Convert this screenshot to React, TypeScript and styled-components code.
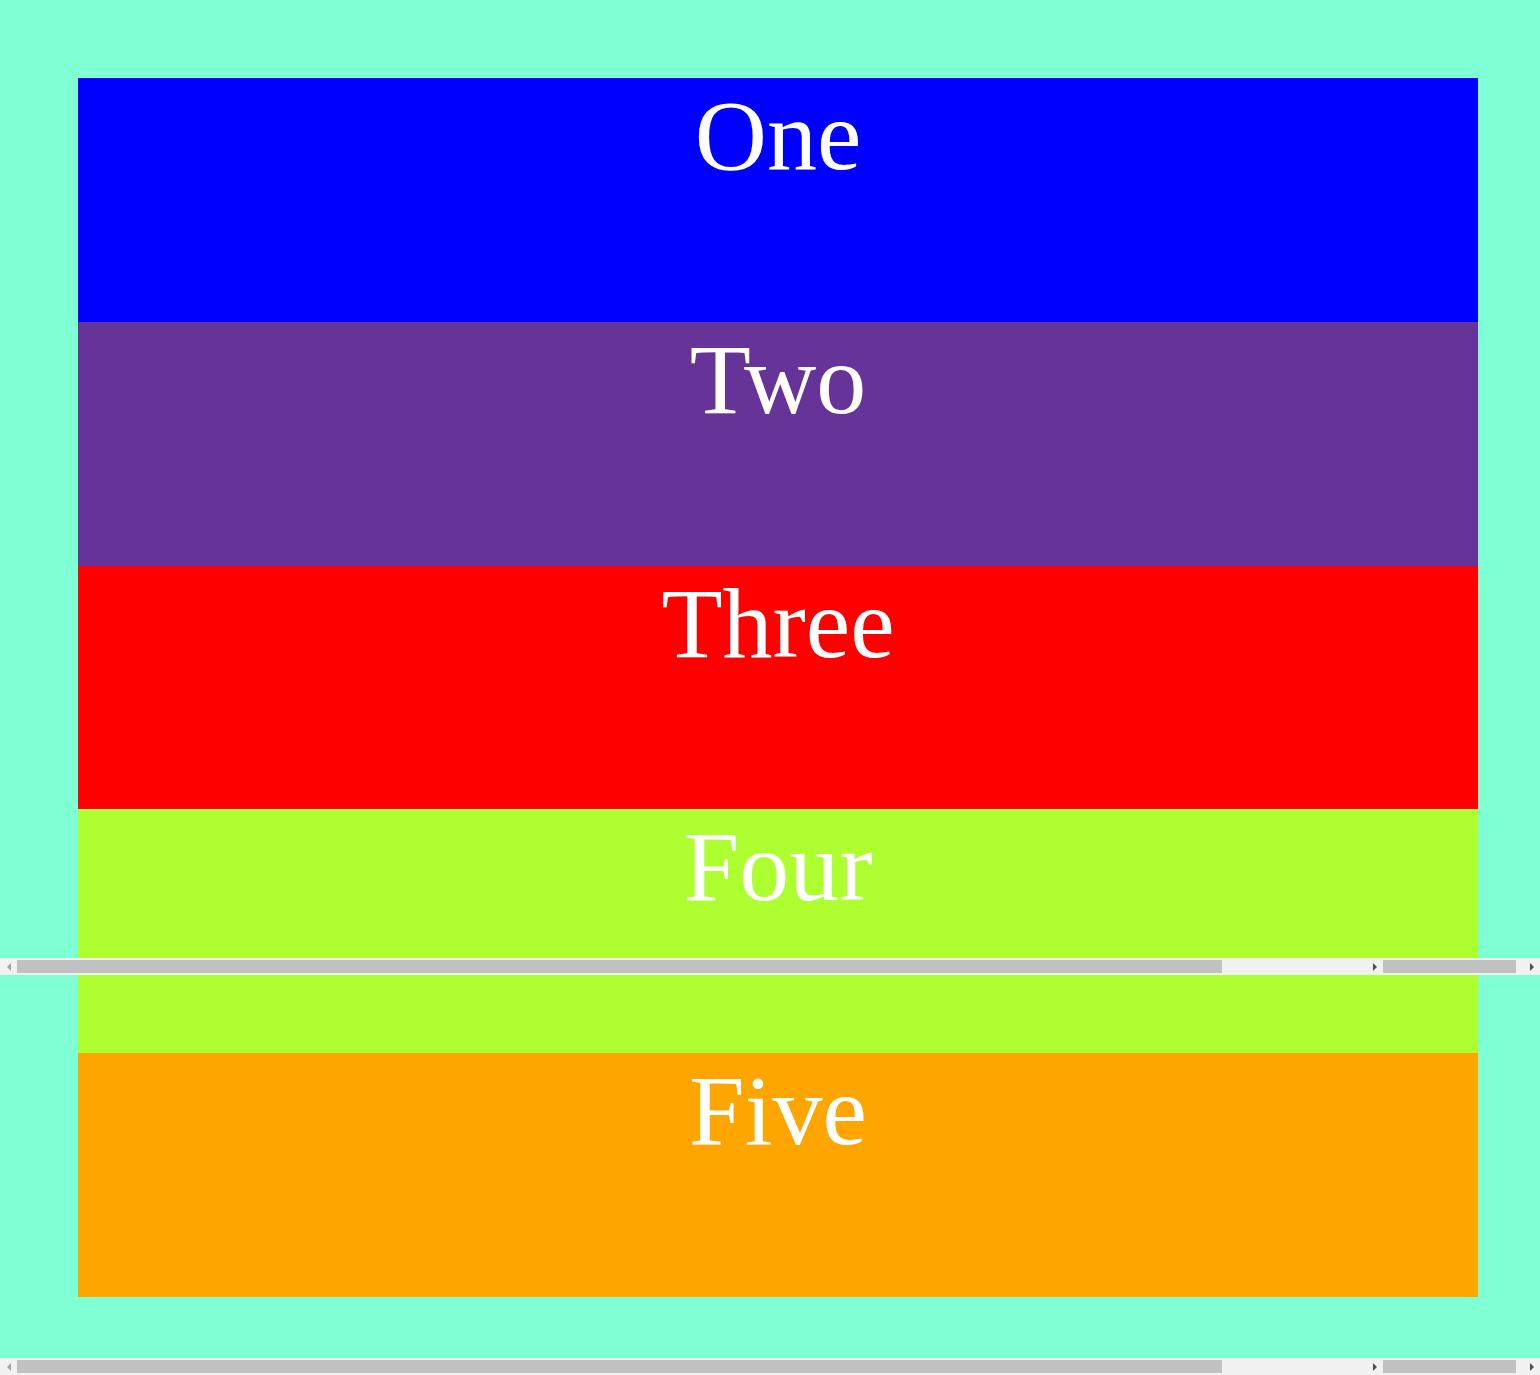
import React from "react";
import styled, { createGlobalStyle } from "styled-components";

const Global = createGlobalStyle`
  html, body { margin: 0; padding: 0; }
  body { background: #7fffd4; font-family: "Liberation Serif", "Times New Roman", serif; }
`;

const Page = styled.div`
  position: relative;
  min-height: 1375px;
  background: #7fffd4;
  padding: 78px 62px 0 78px;
  box-sizing: border-box;
  overflow: hidden;
`;

const Stack = styled.div`
  display: flex;
  flex-direction: column;
  width: 1400px;
`;

const Band = styled.div<{ $bg: string }>`
  height: 243.8px;
  background: ${(p) => p.$bg};
  color: #fff;
  font-size: 100px;
  line-height: normal;
  text-align: center;
`;

/* Scrollbar overlays (lie over the content) */
const Bar = styled.div<{ $top: number }>`
  position: absolute;
  left: 0;
  top: ${(p) => p.$top}px;
  width: 1540px;
  height: 17px;
  display: flex;
  background: #f1f1f1;
`;

const Segment = styled.div<{ $w: number; $padLeft?: number }>`
  width: ${(p) => p.$w}px;
  height: 17px;
  display: flex;
  align-items: center;
  padding-left: ${(p) => p.$padLeft ?? 0}px;
  box-sizing: border-box;
`;

const Thumb = styled.div<{ $w: number }>`
  width: ${(p) => p.$w}px;
  height: 13px;
  background: #c1c1c1;
  flex: none;
`;

const Spacer = styled.div`
  flex: 1;
`;

const ArrowSlot = styled.div<{ $w: number }>`
  width: ${(p) => p.$w}px;
  height: 17px;
  display: flex;
  align-items: center;
  justify-content: center;
  flex: none;
`;

const Arrow = styled.div<{ $dir: "l" | "r" }>`
  width: 0;
  height: 0;
  border-top: 4px solid transparent;
  border-bottom: 4px solid transparent;
  ${(p) =>
    p.$dir === "l"
      ? "border-right: 4px solid #a3a3a3;"
      : "border-left: 4px solid #505050;"}
`;

const ScrollBar = ({ top }: { top: number }) => (
  <Bar $top={top}>
    <Segment $w={1380}>
      <ArrowSlot $w={17}>
        <Arrow $dir="l" />
      </ArrowSlot>
      <Thumb $w={1205} />
      <Spacer />
      <ArrowSlot $w={10}>
        <Arrow $dir="r" />
      </ArrowSlot>
    </Segment>
    <Segment $w={160} $padLeft={3}>
      <Thumb $w={133} />
      <Spacer />
      <ArrowSlot $w={17}>
        <Arrow $dir="r" />
      </ArrowSlot>
    </Segment>
  </Bar>
);

const bands = [
  { label: "One", bg: "#0000ff" },
  { label: "Two", bg: "#663399" },
  { label: "Three", bg: "#ff0000" },
  { label: "Four", bg: "#adff2f" },
  { label: "Five", bg: "#ffa500" },
];

export default function App() {
  return (
    <>
      <Global />
      <Page>
        <Stack>
          {bands.map((b) => (
            <Band key={b.label} $bg={b.bg}>
              {b.label}
            </Band>
          ))}
        </Stack>
        <ScrollBar top={958} />
        <ScrollBar top={1358} />
      </Page>
    </>
  );
}
